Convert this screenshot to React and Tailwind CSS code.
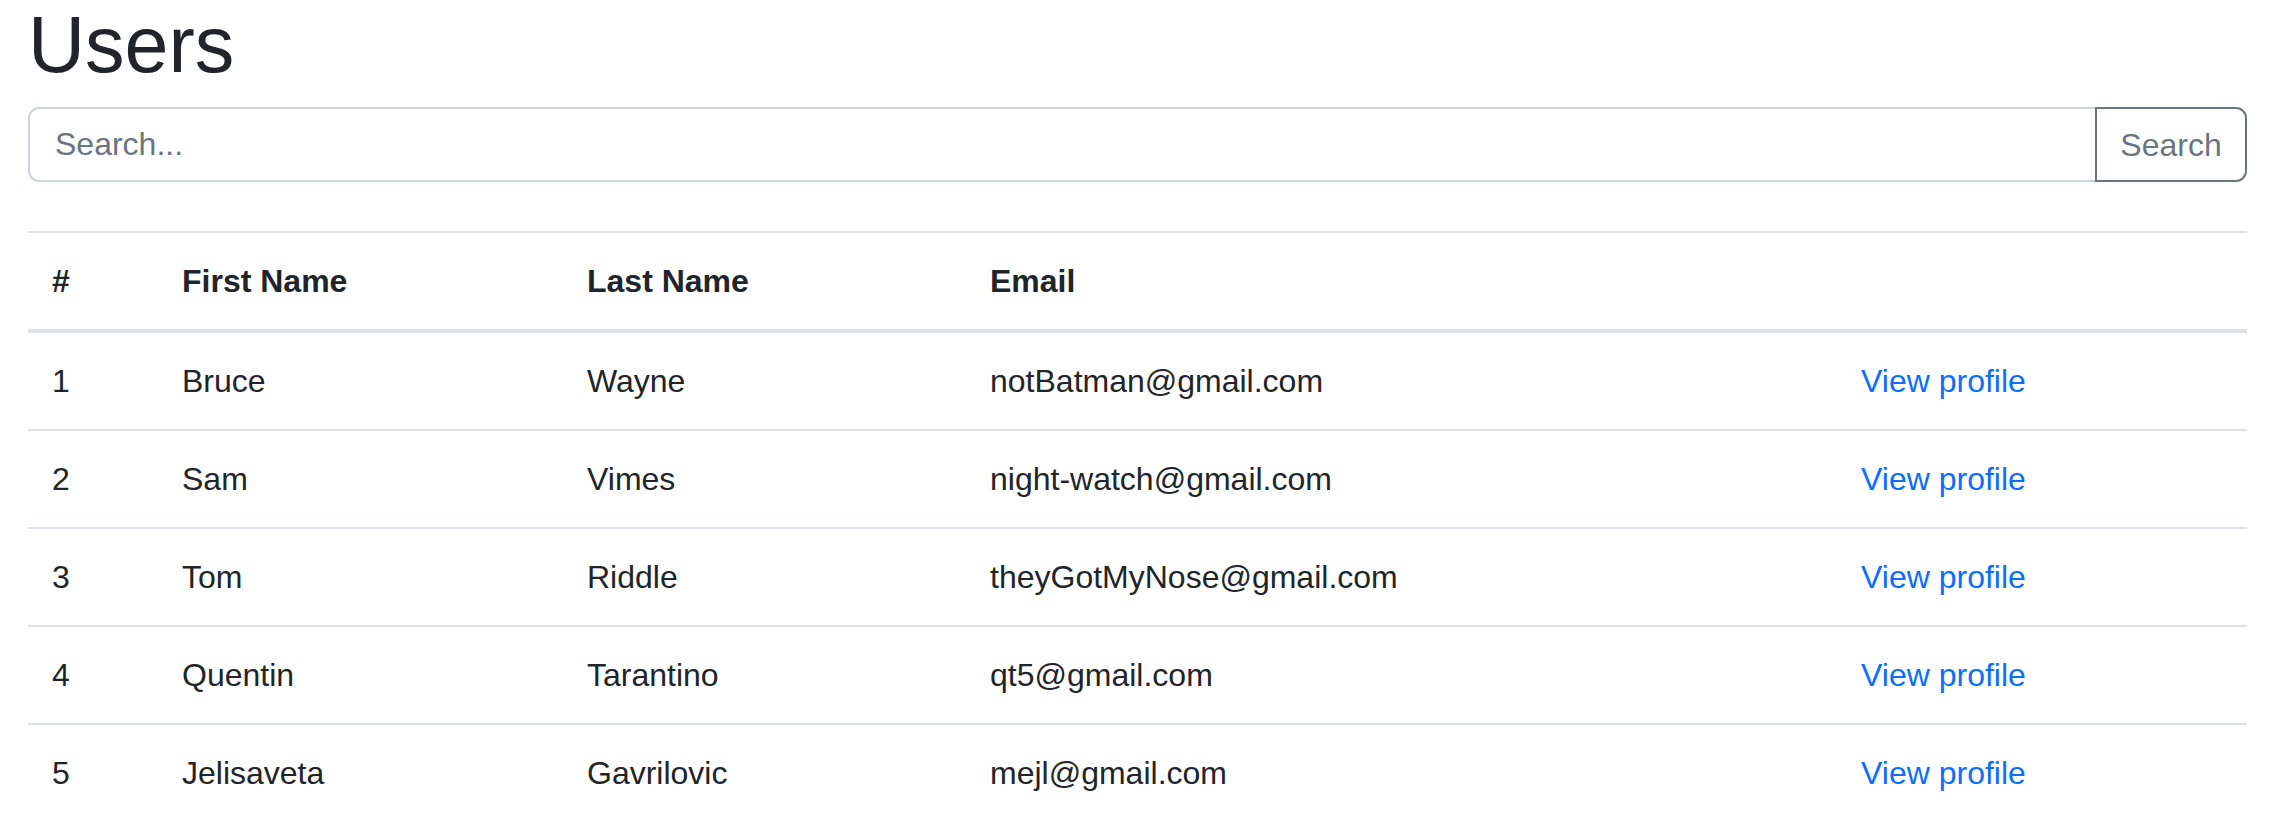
import React, { useState } from 'react';

const users = [
  { id: 1, firstName: 'Bruce', lastName: 'Wayne', email: 'notBatman@gmail.com' },
  { id: 2, firstName: 'Sam', lastName: 'Vimes', email: 'night-watch@gmail.com' },
  { id: 3, firstName: 'Tom', lastName: 'Riddle', email: 'theyGotMyNose@gmail.com' },
  { id: 4, firstName: 'Quentin', lastName: 'Tarantino', email: 'qt5@gmail.com' },
  { id: 5, firstName: 'Jelisaveta', lastName: 'Gavrilovic', email: 'mejl@gmail.com' },
];

function App() {
  const [query, setQuery] = useState('');

  return (
    <div className="min-h-screen bg-white pl-[28px] pr-[25px] text-[#212529] font-['Liberation_Sans',Arial,sans-serif]">
      <h1 className="text-[79px] leading-[90px] font-medium mb-[17px]">Users</h1>

      {/* Search bar */}
      <form className="flex h-[75px]" onSubmit={(e) => e.preventDefault()}>
        <input
          type="text"
          value={query}
          onChange={(e) => setQuery(e.target.value)}
          placeholder="Search..."
          className="flex-1 min-w-0 h-full px-[25px] text-[32px] border-2 border-r-0 border-[#ced4da] rounded-l-[11px] placeholder-[#6c757d] focus:outline-none"
        />
        <button
          type="submit"
          className="w-[152px] h-full text-[32px] text-[#6c757d] border-2 border-[#6c757d] rounded-r-[11px] bg-white"
        >
          Search
        </button>
      </form>

      {/* Users table */}
      <table className="w-full mt-[49px] border-collapse text-[32px] leading-[48px]">
        <thead>
          <tr className="border-t-2 border-b-4 border-[#dee2e6] text-left">
            <th className="w-[130px] px-[24px] py-[24px] font-bold">#</th>
            <th className="w-[405px] px-[24px] py-[24px] font-bold">First Name</th>
            <th className="w-[403px] px-[24px] py-[24px] font-bold">Last Name</th>
            <th className="w-[871px] px-[24px] py-[24px] font-bold">Email</th>
            <th className="px-[24px] py-[24px]"></th>
          </tr>
        </thead>
        <tbody>
          {users.map((u) => (
            <tr key={u.id} className="border-b-2 border-[#dee2e6]">
              <td className="px-[24px] py-[24px]">{u.id}</td>
              <td className="px-[24px] py-[24px]">{u.firstName}</td>
              <td className="px-[24px] py-[24px]">{u.lastName}</td>
              <td className="px-[24px] py-[24px]">{u.email}</td>
              <td className="px-[24px] py-[24px]">
                <a href="#" className="text-[#0d6efd]">View profile</a>
              </td>
            </tr>
          ))}
        </tbody>
      </table>
    </div>
  );
}

export default App;
